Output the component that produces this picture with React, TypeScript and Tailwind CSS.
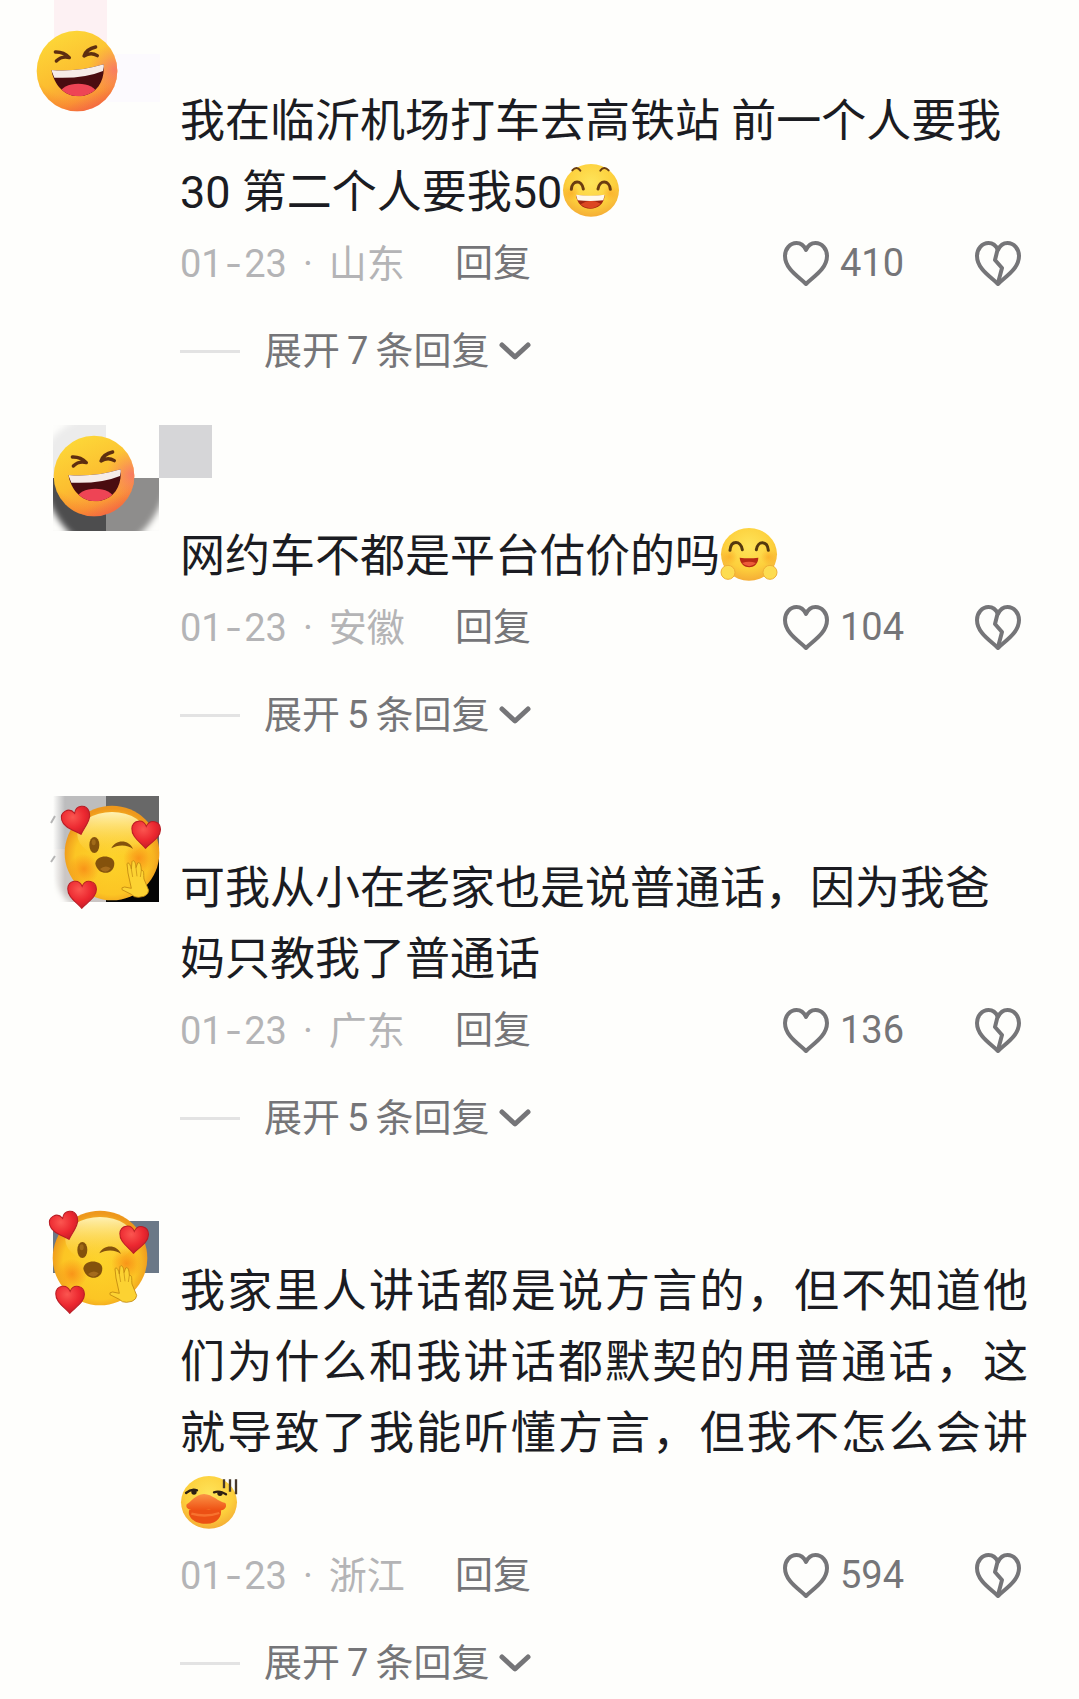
import React, { ReactNode, useId } from 'react';

const FONT = "font-['Roboto','Noto_Sans_CJK_SC',sans-serif]";

function Defs({ id }: { id: string }) {
  return (
    <defs>
      <linearGradient id={`${id}-laugh`} x1="0.3" y1="0" x2="0.75" y2="1">
        <stop offset="0" stopColor="#fdd838" />
        <stop offset="0.5" stopColor="#fcbe30" />
        <stop offset="0.8" stopColor="#fa9838" />
        <stop offset="1" stopColor="#f2605c" />
      </linearGradient>
      <radialGradient id={`${id}-laughSide`} cx="0.97" cy="0.48" r="0.32">
        <stop offset="0" stopColor="#f8746a" stopOpacity="0.85" />
        <stop offset="1" stopColor="#f8846a" stopOpacity="0" />
      </radialGradient>
      <radialGradient id={`${id}-laughBottom`} cx="0.45" cy="0.3" r="0.75">
        <stop offset="0.7" stopColor="#f77a20" stopOpacity="0" />
        <stop offset="1" stopColor="#f4602a" stopOpacity="0.55" />
      </radialGradient>
      <radialGradient id={`${id}-love`} cx="0.5" cy="0.55" r="0.52">
        <stop offset="0" stopColor="#fdd32a" />
        <stop offset="0.75" stopColor="#fcc524" />
        <stop offset="1" stopColor="#ee981c" />
      </radialGradient>
      <linearGradient id={`${id}-shine`} x1="0" y1="0" x2="0" y2="1">
        <stop offset="0" stopColor="#fff3b4" />
        <stop offset="1" stopColor="#fdd640" stopOpacity="0" />
      </linearGradient>
      <radialGradient id={`${id}-blush`}>
        <stop offset="0" stopColor="#f88414" stopOpacity="0.75" />
        <stop offset="1" stopColor="#f88414" stopOpacity="0" />
      </radialGradient>
      <radialGradient id={`${id}-heart`} cx="0.4" cy="0.3" r="0.7">
        <stop offset="0" stopColor="#fb5650" />
        <stop offset="0.6" stopColor="#ec2830" />
        <stop offset="1" stopColor="#c81c28" />
      </radialGradient>
      <radialGradient id={`${id}-small`} cx="0.5" cy="0.35" r="0.65">
        <stop offset="0" stopColor="#fee45a" />
        <stop offset="0.65" stopColor="#fdd03c" />
        <stop offset="1" stopColor="#f5ae36" />
      </radialGradient>
      <linearGradient id={`${id}-beak`} x1="0" y1="0" x2="0" y2="1">
        <stop offset="0" stopColor="#fb9446" />
        <stop offset="1" stopColor="#ee4e12" />
      </linearGradient>
      <linearGradient id={`${id}-fade`} x1="0" y1="0" x2="1" y2="0">
        <stop offset="0" stopColor="#fefefc" />
        <stop offset="1" stopColor="#fefefc" stopOpacity="0" />
      </linearGradient>
      <filter id={`${id}-soft`} x="-20%" y="-20%" width="140%" height="140%">
        <feGaussianBlur stdDeviation="3" />
      </filter>
      <clipPath id={`${id}-mouth`}>
        <path d="M-77 -3 Q0 4 80 -20 C84 28 62 66 20 74 C-34 84 -68 44 -77 -3Z" />
      </clipPath>
    </defs>
  );
}

function LaughFace({ id, x, y }: { id: string; x: number; y: number }) {
  return (
    <g transform={`translate(${x} ${y}) scale(0.3333)`}>
      <circle r="121" fill={`url(#${id}-laugh)`} />
      <circle r="121" fill={`url(#${id}-laughBottom)`} />
      <circle r="121" fill={`url(#${id}-laughSide)`} />
      <g fill="none" stroke="#5e2e10" strokeWidth="10" strokeLinecap="round" strokeLinejoin="round">
        <path d="M-65 -57 Q-40 -58 -23 -40 Q-46 -46 -62 -30" />
        <path d="M56 -72 Q28 -66 21 -45 Q42 -58 61 -46" />
      </g>
      <g clipPath={`url(#${id}-mouth)`}>
        <path d="M-80 -24H84V84H-80Z" fill="#4a0c10" />
        <ellipse cx="4" cy="66" rx="54" ry="28" fill="#ee4455" />
        <path d="M-80 -10 Q0 0 84 -26 L78 0 Q20 24 -68 20Z" fill="#f6ece8" />
      </g>
    </g>
  );
}

function RedHeart({ id, x, y, r }: { id: string; x: number; y: number; r: number }) {
  return (
    <path
      transform={`translate(${x} ${y}) rotate(${r})`}
      d="M0 42 C-16 24 -44 8 -43 -16 C-42 -42 -10 -48 0 -24 C10 -48 42 -42 43 -16 C44 8 16 24 0 42Z"
      fill={`url(#${id}-heart)`}
      stroke="#b91c24"
      strokeWidth="3"
    />
  );
}

function LoveFace({ id, x, y }: { id: string; x: number; y: number }) {
  return (
    <g transform={`translate(${x} ${y}) scale(0.3333)`}>
      <circle r="142" fill={`url(#${id}-love)`} />
      <ellipse cy="-55" rx="104" ry="68" fill={`url(#${id}-shine)`} />
      <circle cx="-84" cy="48" r="46" fill={`url(#${id}-blush)`} />
      <circle cx="80" cy="16" r="46" fill={`url(#${id}-blush)`} />
      <ellipse cx="-53" cy="-24" rx="15" ry="24" fill="#84520c" />
      <ellipse cx="-55" cy="-32" rx="6" ry="9" fill="#a06a18" />
      <path d="M-2 -14 C10 -42 52 -42 63 -12 C48 -26 16 -26 -2 -14Z" fill="#84520c" />
      <path d="M-50 32 C-48 4 4 4 7 30 C8 68 -42 70 -50 32Z" fill="#84520c" />
      <path d="M-36 48 Q-20 34 -4 46 Q-18 66 -36 48Z" fill="#a56b1c" />
      <path
        d="M45 32 C50 26 55 34 58 48 L60 26 C65 19 71 26 72 44 L77 30 C84 26 87 35 88 52 C98 52 94 62 96 78 L110 112 Q110 124 96 130 L80 133 Q66 134 58 124 L30 110 Q26 103 38 102 L58 106 L48 60Z"
        fill="#fcd232"
        stroke="#bf8610"
        strokeWidth="2.5"
        strokeLinejoin="round"
      />
      <path d="M58 48 L62 72 M72 44 L75 70 M88 52 L85 72" stroke="#bf8610" strokeWidth="2" />
      <RedHeart id={id} x={-105} y={-96} r={-17} />
      <RedHeart id={id} x={102} y={-56} r={2} />
      <RedHeart id={id} x={-90} y={124} r={1} />
    </g>
  );
}

const AVATAR_VIEWS = ['0 0 240 180', '0 2 240 180', '0 0 240 180', '0 1 240 180'];

function Avatar({ kind }: { kind: number }) {
  const id = useId();
  return (
    <svg
      className="absolute left-0 top-0 h-[180px] w-[240px]"
      viewBox={AVATAR_VIEWS[kind]}
      role="img"
      aria-label="头像"
    >
      <Defs id={id} />
      {kind === 0 && (
        <>
          <path d="M54 0h53v107H54z" fill="#fdeff2" opacity="0.9" />
          <path d="M107 54h53v48h-53z" fill="#fcfafe" />
          <path d="M54 80h53v27H54z" fill="#fefefc" />
          <LaughFace id={id} x={77} y={71} />
        </>
      )}
      {kind === 1 && (
        <>
          <g>
            <path d="M53 39h53v53H53z" fill="#ececec" />
            <path d="M53 92h53v53H53z" fill="#4d4d4e" />
            <path d="M106 92h53v53h-53z" fill="#8e8d8c" />
            <path d="M159 39h53v53h-53z" fill="#d6d6d8" />
            <path d="M46 108 Q56 136 74 151 H46Z" fill="#fefefc" filter={`url(#${id}-soft)`} />
            <path d="M166 104 Q156 136 136 151 H166Z" fill="#fefefc" filter={`url(#${id}-soft)`} />
            <path d="M46 62 Q54 44 78 34 H46Z" fill="#fefefc" filter={`url(#${id}-soft)`} />
          </g>
          <LaughFace id={id} x={94} y={90} />
        </>
      )}
      {kind === 2 && (
        <>
          <path d="M53 44h53v53H53z" fill="#bdbdbe" />
          <path d="M106 44h53v53h-53z" fill="#686868" />
          <path d="M53 97h53v53H53z" fill="#cbc6c4" />
          <path d="M106 97h53v53h-53z" fill="#050505" />
          <path d="M53 44h12v106H53z" fill={`url(#${id}-fade)`} />
          <path d="M46 120 Q58 142 76 156 H46Z" fill="#fefefc" filter={`url(#${id}-soft)`} />
          <path d="M55 64L51 71M55 104L51 110" stroke="#b5b5b5" strokeWidth="2" fill="none" />
          <LoveFace id={id} x={112} y={101} />
        </>
      )}
      {kind === 3 && (
        <>
          <path d="M53 67h106v52H53z" fill="#6b7887" />
          <LoveFace id={id} x={100} y={104} />
        </>
      )}
    </svg>
  );
}

function Emoji({ kind }: { kind: 'grin' | 'hug' | 'duck' }) {
  const id = useId();
  const label = { grin: '大笑', hug: '拥抱', duck: '尴尬' }[kind];
  return (
    <svg
      className="-mt-2 mb-0.5 inline-block h-14 w-[58px] align-middle"
      viewBox="0 0 174 168"
      role="img"
      aria-label={label}
    >
      <Defs id={id} />
      <ellipse cx="87" cy="82" rx="84" ry="79" fill={`url(#${id}-small)`} />
      {kind !== 'duck' && (
        <>
          <circle cx="28" cy="90" r="24" fill={`url(#${id}-blush)`} opacity="0.5" />
          <circle cx="146" cy="90" r="24" fill={`url(#${id}-blush)`} opacity="0.5" />
        </>
      )}
      {kind === 'grin' && (
        <>
          <g fill="none" stroke="#6b3d10" strokeLinecap="round">
            <path d="M28 79C30 50 60 50 64 78M108 78C112 50 142 50 145 79" strokeWidth="9" />
            <path d="M31 22Q44 8 55 23M115 23Q126 8 140 22" strokeWidth="6" />
          </g>
          <path d="M42 96 Q86 102 128 96 C126 124 108 137 85 137 C62 137 45 122 42 96Z" fill="#a02410" />
          <path d="M56 124 Q84 104 116 122 Q86 148 56 124Z" fill="#dc4722" />
          <path d="M42 95 Q86 101 128 95 L124 112 Q86 116 47 112Z" fill="#fff9ec" />
        </>
      )}
      {kind === 'hug' && (
        <>
          <path
            d="M30 70C33 38 62 40 67 68M109 68C113 40 142 40 145 70"
            fill="none"
            stroke="#54380e"
            strokeWidth="9"
            strokeLinecap="round"
          />
          <path d="M59 92 Q87 96 115 92 C114 130 62 130 59 92Z" fill="#b82a14" />
          <path d="M66 108 Q87 100 108 108 Q88 128 66 108Z" fill="#ec5b38" />
          <g fill="#fddc50" stroke="#efaf35" strokeWidth="3">
            <circle cx="24" cy="136" r="21" />
            <circle cx="150" cy="136" r="21" />
          </g>
        </>
      )}
      {kind === 'duck' && (
        <>
          <g fill="none" stroke="#2d2014" strokeWidth="7" strokeLinecap="round">
            <path d="M18 54Q34 40 51 46M102 52Q120 46 138 58" />
          </g>
          <circle cx="42" cy="51" r="8" fill="#2d2014" />
          <circle cx="120" cy="55" r="8" fill="#2d2014" />
          <path d="M28 104 C20 126 46 148 80 146 C112 146 128 122 122 104Z" fill="#ec5014" />
          <path
            d="M20 88 C32 82 46 58 72 57 C98 58 114 80 136 84 C146 102 122 112 100 106 C78 100 60 112 40 106 C24 104 16 98 20 88Z"
            fill={`url(#${id}-beak)`}
          />
          <path d="M34 116 Q78 128 118 114" fill="none" stroke="#fa7a34" strokeWidth="7" opacity="0.8" />
          <path d="M132 13V40M150 13V50M168 13V58" stroke="#47382a" strokeWidth="7" />
        </>
      )}
    </svg>
  );
}

const HEART =
  'M23 43 C16 36 2 28 2 15 C2 8 7 2 13.500 2 C18 2 21 4.500 23 9 C25 4.500 28 2 32.500 2 C39 2 44 8 44 15 C44 28 30 36 23 43Z';

function HeartIcon({ broken = false }: { broken?: boolean }) {
  return (
    <svg
      className="h-[45px] w-[46px] shrink-0"
      viewBox="0 0 46 45"
      fill="none"
      stroke="currentColor"
      strokeWidth="4"
      strokeLinejoin="round"
      aria-hidden="true"
    >
      <path d={HEART} />
      {broken && <path d="M23 7 L20 19 L27 27 L23 42" />}
    </svg>
  );
}

interface CommentProps {
  avatar: number;
  head: string;
  place: string;
  likes: number;
  replies: number;
  justify?: boolean;
  children: ReactNode;
}

function Comment({ avatar, head, place, likes, replies, justify, children }: CommentProps) {
  return (
    <article className={`relative pl-[180px] pr-[51px] ${head}`}>
      <Avatar kind={avatar} />
      <p className={`text-[45px] leading-[71px] text-[#1b1c22] ${justify ? 'text-justify' : ''}`}>{children}</p>
      <div className="flex h-[70px] items-center text-[38px] leading-[56px] text-[#757578]">
        <span className="whitespace-nowrap text-[#b4b4b6]">
          <time>
            01<span className="px-[2px] font-['Inter']">-</span>23
          </time>
          <span className="px-4">·</span>
          {place}
        </span>
        <button type="button" className="ml-[50px] whitespace-nowrap">
          回复
        </button>
        <button type="button" aria-label={`赞 ${likes}`} className="ml-auto flex items-center gap-[11px]">
          <HeartIcon />
          <span className="w-[64px] text-left">{likes}</span>
        </button>
        <button type="button" aria-label="不喜欢" className="ml-[71px] mr-[7px]">
          <HeartIcon broken />
        </button>
      </div>
      <button
        type="button"
        className="mt-4 flex h-[74px] items-center text-[38px] leading-[56px] text-[#757578]"
      >
        <span className="mr-6 h-[3px] w-[60px] bg-[#e3e3e3]" />
        <span className="whitespace-nowrap">
          展开<span className="px-[7px]">{replies}</span>条回复
        </span>
        <svg
          className="ml-[10px] h-5 w-8"
          viewBox="0 0 32 20"
          fill="none"
          stroke="currentColor"
          strokeWidth="5"
          strokeLinecap="round"
          strokeLinejoin="round"
          aria-hidden="true"
        >
          <path d="M3 4 L16 16 L29 4" />
        </svg>
      </button>
    </article>
  );
}

export default function App() {
  return (
    <main className={`min-h-screen overflow-hidden bg-[#fefefc] ${FONT}`} lang="zh-CN">
      <Comment avatar={0} head="pt-[86px]" place="山东" likes={410} replies={7}>
        我在临沂机场打车去高铁站 前一个人要我30 第二个人要我50
        <Emoji kind="grin" />
      </Comment>
      <Comment avatar={1} head="pt-[133px]" place="安徽" likes={104} replies={5}>
        网约车不都是平台估价的吗
        <Emoji kind="hug" />
      </Comment>
      <Comment avatar={2} head="pt-[101px]" place="广东" likes={136} replies={5}>
        可我从小在老家也是说普通话，因为我爸妈只教我了普通话
      </Comment>
      <Comment avatar={3} head="pt-[101px]" place="浙江" likes={594} replies={7} justify>
        我家里人讲话都是说方言的，但不知道他们为什么和我讲话都默契的用普通话，这就导致了我能听懂方言，但我不怎么会讲
        <Emoji kind="duck" />
      </Comment>
    </main>
  );
}
